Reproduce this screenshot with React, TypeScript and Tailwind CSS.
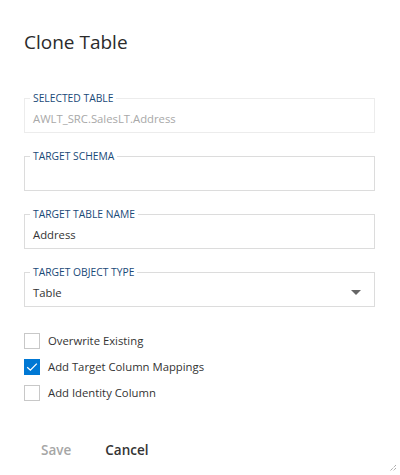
import React from "react";

const font = { fontFamily: '"Open Sans", "Noto Sans", Arial, sans-serif' };

function Field({ label, value, muted, light, select }: { label: string; value: string; muted?: boolean; light?: boolean; select?: boolean }) {
  return (
    <fieldset className={`border ${light ? "border-[#ececec]" : "border-[#dcdcdc]"} pl-[5px] pr-[13px] pb-[5px] m-0 min-w-0`}>
      <legend className="px-[3px] text-[10.3px] leading-[12px] text-[#1a4a78] uppercase">{label}</legend>
      <div className="flex items-center justify-between h-[16px] mt-[7px] pl-[3px]">
        <span className={`text-[11.3px] leading-[16px] ${muted ? "text-[#a8a8a8]" : "text-[#333333]"}`}>{value}</span>
        {select && (
          <svg width="10" height="6" viewBox="0 0 10 6">
            <polygon points="0,0 10,0 5,5" fill="#666666" />
          </svg>
        )}
      </div>
    </fieldset>
  );
}

function Check({ label, checked }: { label: string; checked?: boolean }) {
  return (
    <div className="flex items-center h-[16px]">
      {checked ? (
        <div className="w-[16px] h-[16px] bg-[#0078d4] flex items-center justify-center">
          <svg width="12" height="10" viewBox="0 0 12 10">
            <path d="M1.2 5.2 L4.4 8.2 L10.8 1.6" stroke="white" strokeWidth="1.3" fill="none" />
          </svg>
        </div>
      ) : (
        <div className="w-[16px] h-[16px] border border-[#c8c8c8] bg-white" />
      )}
      <span className="ml-[8px] text-[11.3px] leading-[16px] text-[#333333]">{label}</span>
    </div>
  );
}

export default function App() {
  return (
    <div className="w-[400px] h-[475px] bg-white relative overflow-hidden" style={font}>
      <div className="px-[24px] pt-[28px]">
        <h1 className="text-[19px] leading-[28px] text-[#2b2b2b] font-medium m-0">Clone Table</h1>
        <div className="flex flex-col gap-[17px] mt-[36px] pr-[1px]">
          <Field label="Selected Table" value="AWLT_SRC.SalesLT.Address" muted light />
          <Field label="Target Schema" value="" />
          <Field label="Target Table Name" value="Address" />
          <Field label="Target Object Type" value="Table" select />
        </div>
        <div className="flex flex-col gap-[10px] mt-[26px]">
          <Check label="Overwrite Existing" />
          <Check label="Add Target Column Mappings" checked />
          <Check label="Add Identity Column" />
        </div>
        <div className="flex gap-0 mt-[33px]">
          <button className="px-[17px] h-[32px] text-[13.5px] font-semibold text-[#a6a6a6]">Save</button>
          <button className="px-[17px] h-[32px] text-[13.5px] font-semibold text-[#333333]">Cancel</button>
        </div>
      </div>
      <svg width="8" height="8" viewBox="0 0 8 8" className="absolute right-[3px] bottom-[3px]">
        <path d="M7 1 L1 7 M7 4 L4 7" stroke="#888" strokeWidth="1" strokeDasharray="1 1" />
      </svg>
    </div>
  );
}
